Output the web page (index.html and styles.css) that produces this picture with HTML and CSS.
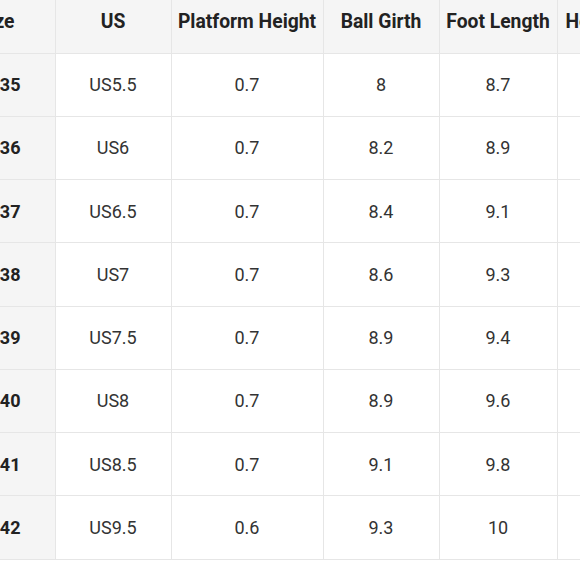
FILE: index.html
```html
<!DOCTYPE html>
<html>
<head>
<meta charset="utf-8">
<link rel="stylesheet" href="styles.css">
</head>
<body>
<div class="wrap">
<table class="size-table">
<colgroup>
<col class="c-size"><col class="c-us"><col class="c-plat"><col class="c-ball"><col class="c-foot"><col class="c-heel">
</colgroup>
<thead>
<tr><th class="first">Size</th><th>US</th><th>Platform Height</th><th>Ball Girth</th><th>Foot Length</th><th class="last">Heel Height</th></tr>
</thead>
<tbody>
<tr><td class="first">35</td><td>US5.5</td><td>0.7</td><td>8</td><td>8.7</td><td>3.1</td></tr>
<tr><td class="first">36</td><td>US6</td><td>0.7</td><td>8.2</td><td>8.9</td><td>3.1</td></tr>
<tr><td class="first">37</td><td>US6.5</td><td>0.7</td><td>8.4</td><td>9.1</td><td>3.1</td></tr>
<tr><td class="first">38</td><td>US7</td><td>0.7</td><td>8.6</td><td>9.3</td><td>3.1</td></tr>
<tr><td class="first">39</td><td>US7.5</td><td>0.7</td><td>8.9</td><td>9.4</td><td>3.1</td></tr>
<tr><td class="first">40</td><td>US8</td><td>0.7</td><td>8.9</td><td>9.6</td><td>3.1</td></tr>
<tr><td class="first">41</td><td>US8.5</td><td>0.7</td><td>9.1</td><td>9.8</td><td>3.1</td></tr>
<tr><td class="first">42</td><td>US9.5</td><td>0.6</td><td>9.3</td><td>10</td><td>3.1</td></tr>
</tbody>
</table>
</div>
</body>
</html>
```
FILE: styles.css
```css
html, body {
  margin: 0;
  padding: 0;
  background: #ffffff;
}
.wrap {
  width: 580px;
  height: 580px;
  overflow: hidden;
}
.size-table {
  border-collapse: collapse;
  table-layout: fixed;
  width: 718px;
  margin-left: -45px;
  font-family: Roboto, "Noto Sans", sans-serif;
  font-size: 18px;
  color: #333333;
}
.c-size { width: 100px; }
.c-us { width: 116px; }
.c-plat { width: 152px; }
.c-ball { width: 116px; }
.c-foot { width: 118px; }
.c-heel { width: 116px; }
th, td {
  border: 1px solid #e6e6e6;
  text-align: center;
  padding: 0;
  white-space: nowrap;
  overflow: hidden;
}
thead tr { height: 53px; }
tbody tr { height: 63.25px; }
th {
  background: #f5f5f5;
  font-size: 19.3px;
  font-weight: 700;
  color: #222222;
  border-top: none;
  padding-bottom: 10px;
}
th.last {
  text-align: left;
  padding-left: 8px;
}
td.first, th.first {
  background: #f5f5f5;
  font-weight: 700;
  color: #222222;
  text-align: right;
  border-left: none;
}
td.first { padding-right: 34px; }
th.first { padding-right: 40px; }
```
